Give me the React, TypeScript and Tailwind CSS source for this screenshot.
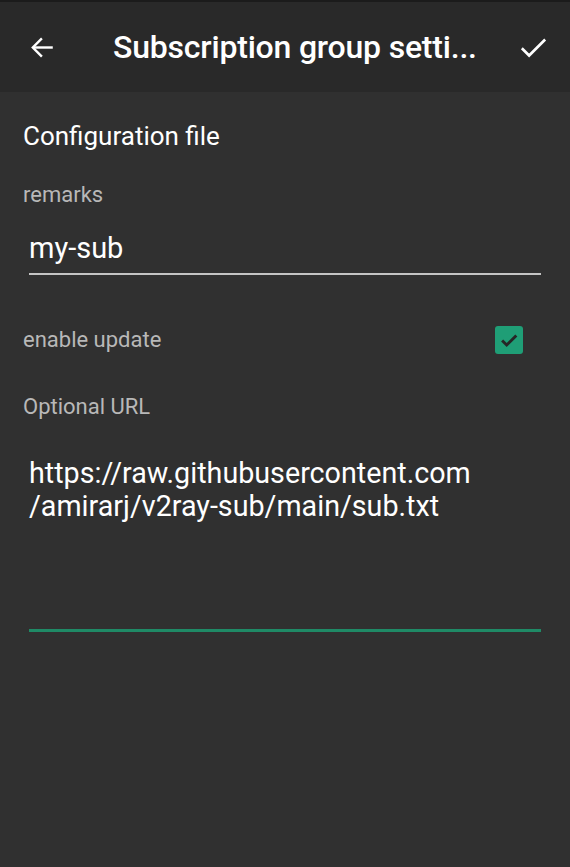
import React from "react";

const App = () => {
  return (
    <div
      className="w-[570px] h-[867px] bg-[#303030] flex flex-col"
      style={{ fontFamily: "Roboto, 'Liberation Sans', sans-serif" }}
    >
      <div className="h-[2px] bg-[#1b1b1b]" />
      <div className="h-[90px] bg-[#292929] flex items-center shrink-0">
        <div className="w-[84px] flex justify-center">
          <svg width="29" height="29" viewBox="0 0 24 24" fill="none" stroke="#fff" strokeWidth="2">
            <path d="M20.5 12H4.5" />
            <path d="M11.5 4.5L4 12l7.5 7.5" />
          </svg>
        </div>
        <div className="flex-1 pl-[29px] text-[32px] font-medium text-white whitespace-nowrap leading-none tracking-[-0.2px]">
          Subscription group setti...
        </div>
        <div className="w-[72px] flex justify-center pr-[2px]">
          <svg width="35" height="35" viewBox="0 0 24 24" fill="none" stroke="#fff" strokeWidth="1.8">
            <path d="M4 12.5l5 5L20 6.5" />
          </svg>
        </div>
      </div>

      <div className="px-[23px] pt-[31px]">
        <div className="text-[26px] text-white leading-none">Configuration file</div>

        <div className="mt-[35px] text-[22px] text-[#b8b8b8] leading-none">remarks</div>
        <div className="mt-[28px] ml-[6px] mr-[6px] border-b-2 border-[#c4c4c4] pb-[10px]">
          <div className="text-[29px] text-white leading-none">my-sub</div>
        </div>

        <div className="mt-[51px] flex items-center justify-between pr-[24px]">
          <div className="text-[22px] text-[#b8b8b8] leading-none">enable update</div>
          <div className="w-[28px] h-[28px] rounded-[3px] bg-[#1f9e76] flex items-center justify-center">
            <svg width="22" height="22" viewBox="0 0 24 24" fill="none" stroke="#262626" strokeWidth="3.2">
              <path d="M4.5 12.5l5 5L20 7" />
            </svg>
          </div>
        </div>

        <div className="mt-[42px] text-[22px] text-[#b8b8b8] leading-none">Optional URL</div>

        <div className="mt-[39px] ml-[6px] mr-[6px] h-[175px] border-b-[3px] border-[#1f8a66]">
          <div className="text-[28.7px] text-white leading-[33px]">
            https://raw.githubusercontent.com
            <br />
            /amirarj/v2ray-sub/main/sub.txt
          </div>
        </div>
      </div>
    </div>
  );
};

export default App;
